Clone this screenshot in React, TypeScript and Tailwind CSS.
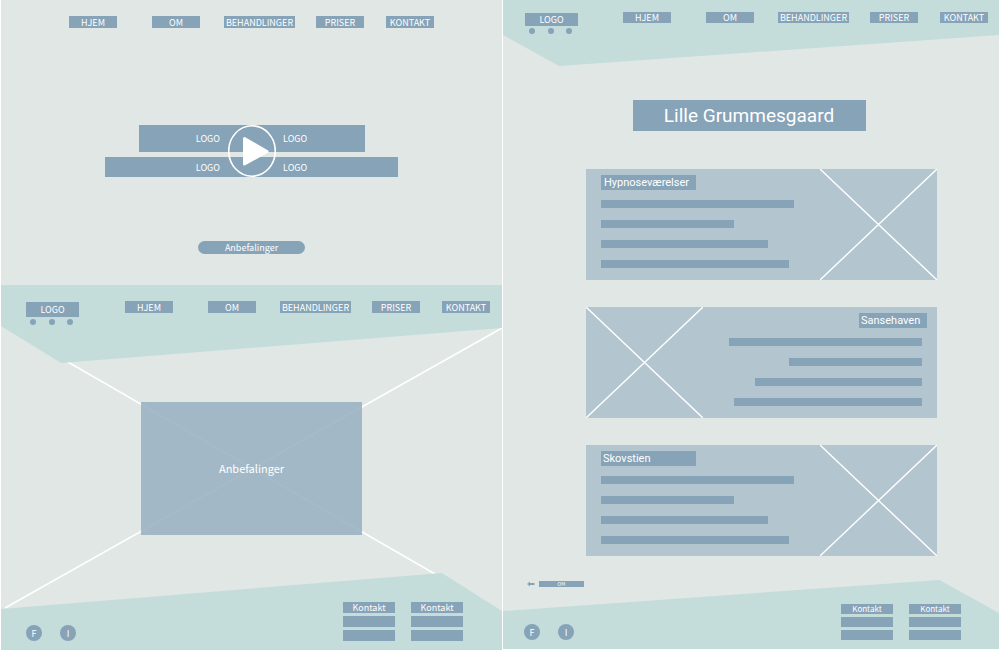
import React from "react";

const navItems = [
  { label: "HJEM", box: "w-12 mr-[35px]" },
  { label: "OM", box: "w-12 mr-6" },
  { label: "BEHANDLINGER", box: "w-[71px] mr-[21px]" },
  { label: "PRISER", box: "w-12 mr-[22px]" },
  { label: "KONTAKT", box: "w-12" },
];

function Nav({ item }: { item: string }) {
  return (
    <nav className="flex shrink-0 text-[9px]">
      {navItems.map((n) => (
        <a
          key={n.label}
          href="#"
          className={`flex items-center justify-center whitespace-nowrap bg-[#86a3b8] ${item} ${n.box}`}
        >
          {n.label}
        </a>
      ))}
    </nav>
  );
}

function Logo({ box }: { box: string }) {
  return (
    <div className="w-[53px] shrink-0">
      <a href="#" className={`flex items-center justify-center bg-[#86a3b8] text-[9px] ${box}`}>
        LOGO
      </a>
      <div className="flex justify-between pl-1 pr-[6px]">
        {[0, 1, 2].map((i) => (
          <span key={i} className="size-[6px] rounded-full bg-[#86a3b8]" />
        ))}
      </div>
    </div>
  );
}

function ContactColumn({ row }: { row: string }) {
  return (
    <div className="flex w-[52px] flex-col gap-[3px]">
      <a href="#" className={`flex items-center justify-center bg-[#86a3b8] ${row}`}>
        Kontakt
      </a>
      <div className={`bg-[#86a3b8] ${row}`} />
      <div className={`bg-[#86a3b8] ${row}`} />
    </div>
  );
}

function Footer({ className, row }: { className: string; row: string }) {
  return (
    <footer className={`relative flex items-end justify-between bg-[#c4dddb] ${className}`}>
      <div className="flex gap-[18px]">
        {["F", "I"].map((s) => (
          <a
            key={s}
            href="#"
            className="flex size-4 items-center justify-center rounded-full bg-[#86a3b8] text-[9px]"
          >
            {s}
          </a>
        ))}
      </div>
      <div className="flex gap-4">
        <ContactColumn row={row} />
        <ContactColumn row={row} />
      </div>
    </footer>
  );
}

function Card({
  title,
  heading,
  reverse = false,
}: {
  title: string;
  heading: string;
  reverse?: boolean;
}) {
  return (
    <article
      className={`flex h-[111px] w-[351px] justify-between bg-[#b3c5cf] ${reverse ? "flex-row-reverse" : ""}`}
    >
      <div
        className={`flex flex-col pt-[6px] ${reverse ? "items-end pr-[15px]" : "items-start pl-[15px]"}`}
      >
        <h2
          className={`flex h-[15px] items-center bg-[#86a3b8] font-[Roboto,sans-serif] text-[11px] ${heading}`}
        >
          {title}
        </h2>
        <div className={`mt-[10px] flex flex-col gap-3 ${reverse ? "items-end" : ""}`}>
          <div className="h-2 w-[193px] bg-[#86a3b8]" />
          <div className="h-2 w-[133px] bg-[#86a3b8]" />
          <div className="h-2 w-[167px] bg-[#86a3b8]" />
          <div className="h-2 w-[188px] bg-[#86a3b8]" />
        </div>
      </div>
      <svg
        viewBox="0 0 117 111"
        preserveAspectRatio="none"
        className="h-full w-[117px]"
        aria-hidden="true"
      >
        <path d="M0 0L117 111M117 0L0 111" fill="none" stroke="#fff" strokeWidth="1.4" />
      </svg>
    </article>
  );
}

function FrontPage() {
  return (
    <div className="flex flex-col bg-[#e1e7e5]">
      <section className="flex h-[285px] flex-col items-center pt-4">
        <Nav item="h-3" />
        <div className="relative mt-[97px] flex flex-col items-center gap-[5px] text-[9px]">
          <div className="flex h-[27px] w-[226px] items-center justify-center gap-[63px] bg-[#86a3b8]">
            <span>LOGO</span>
            <span>LOGO</span>
          </div>
          <div className="flex h-5 w-[293px] items-center justify-center gap-[63px] bg-[#86a3b8]">
            <span>LOGO</span>
            <span>LOGO</span>
          </div>
          <button type="button" aria-label="Afspil" className="absolute inset-0 m-auto h-[52px] w-12">
            <svg viewBox="0 0 48 52" className="size-full" aria-hidden="true">
              <ellipse cx="24" cy="26" rx="23.3" ry="25.2" fill="none" stroke="#fff" strokeWidth="1.6" />
              <path
                d="M16.500 13.5L39 26.500L16.500 39Z"
                fill="#fff"
                stroke="#fff"
                strokeWidth="3"
                strokeLinejoin="round"
              />
            </svg>
          </button>
        </div>
        <button
          type="button"
          className="mt-16 flex h-[13px] w-[107px] items-center justify-center rounded-full bg-[#86a3b8] text-[9px]"
        >
          Anbefalinger
        </button>
      </section>

      <section className="relative flex flex-1 flex-col">
        <svg
          viewBox="0 0 501 365"
          preserveAspectRatio="none"
          className="absolute inset-0 size-full"
          aria-hidden="true"
        >
          <path d="M67 77L434 289M501 43L4 323" fill="none" stroke="#fff" strokeWidth="1.6" />
        </svg>
        <header className="relative flex h-[78px] items-start justify-between bg-[#c4dddb] pl-[25px] pr-3 pt-4 [clip-path:polygon(0_0,100%_0,100%_43px,60px_100%,0_41px)]">
          <Logo box="mt-px mb-[2px] h-[15px]" />
          <Nav item="h-3" />
        </header>
        <div className="relative flex flex-1 items-center justify-center">
          <button
            type="button"
            className="flex h-[133px] w-[221px] items-center justify-center bg-[#97afc1]/85 text-[11px]"
          >
            Anbefalinger
          </button>
        </div>
        <Footer
          row="h-[11px]"
          className="h-[77px] pb-[9px] pl-[25px] pr-[39px] text-[9px] [clip-path:polygon(0_36px,88%_0,100%_38px,100%_100%,0_100%)]"
        />
      </section>
    </div>
  );
}

function AboutPage() {
  return (
    <div className="mb-px flex flex-col bg-[#e1e7e5]">
      <header className="flex h-[66px] items-start justify-between bg-[#c4dddb] pl-[22px] pr-[11px] pt-3 [clip-path:polygon(0_0,100%_0,100%_35px,56px_100%,0_35px)]">
        <Logo box="mt-px mb-[2px] h-[13px]" />
        <Nav item="h-[11px]" />
      </header>
      <main className="flex flex-1 flex-col items-center pt-[34px]">
        <h1 className="mr-1 flex h-[31px] w-[233px] items-center justify-center bg-[#86a3b8] font-[Roboto,sans-serif] text-[19px]">
          Lille Grummesgaard
        </h1>
        <div className="ml-[21px] mt-[38px] flex flex-col gap-[27px]">
          <Card title="Hypnoseværelser" heading="w-[95px] pl-[3px]" />
          <Card title="Sansehaven" heading="-mr-[5px] w-[68px] pl-[2px]" reverse />
          <Card title="Skovstien" heading="w-[95px] pl-[2px]" />
        </div>
      </main>
      <a href="#" className="ml-6 flex items-center gap-1 self-start text-[5px] leading-[6px]">
        <svg viewBox="0 0 8 6" className="h-[6px] w-2" aria-hidden="true">
          <path d="M0 3L3 .5V2H7.500V4H3V5.500Z" fill="#86a3b8" />
        </svg>
        <span className="flex h-[6px] w-[45px] items-center justify-center bg-[#86a3b8]">OM</span>
      </a>
      <Footer
        row="h-[10px]"
        className="-mt-[7px] h-[69px] pb-[9px] pl-[21px] pr-[38px] text-[8px] [clip-path:polygon(0_31px,88%_0,100%_33px,100%_100%,0_100%)]"
      />
    </div>
  );
}

export default function App() {
  return (
    <div className="grid min-h-screen grid-cols-[501fr_496fr] gap-px bg-white px-px font-['Noto_Sans_CJK_SC','Noto_Sans',sans-serif] leading-none text-white">
      <FrontPage />
      <AboutPage />
    </div>
  );
}
